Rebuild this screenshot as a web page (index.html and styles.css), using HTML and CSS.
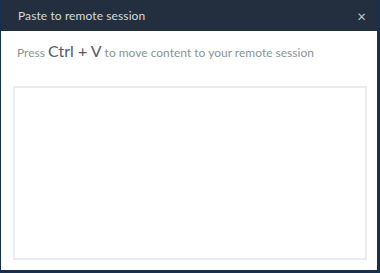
FILE: index.html
```html
<!DOCTYPE html>
<html lang="en">

<head>
    <meta charset="UTF-8">
    <meta name="viewport" content="width=device-width, initial-scale=1.0">
    <title>Paste to remote session</title>
    <link rel="stylesheet" href="styles.css">
</head>

<body>
    <div class="dialog">
        <div class="dialog_header">
            <span class="dialog_title">Paste to remote session</span>
            <span class="close_btn">&#215;</span>
        </div>
        <div class="dialog_body">
            <p class="hint">Press <span class="keys">Ctrl + V</span> to move content to your remote session</p>
            <textarea class="paste_area"></textarea>
        </div>
    </div>
</body>

</html>
```

FILE: styles.css
```css
* {
    margin: 0;
    padding: 0;
    box-sizing: border-box;
}

body {
    background: #16314f;
    font-family: Lato, "Open Sans", sans-serif;
    overflow: hidden;
}

.dialog {
    width: 376px;
    height: 270px;
    margin-left: 1px;
    background: #fff;
    display: flex;
    flex-direction: column;
}

.dialog_header {
    height: 31px;
    background: #232f3e;
    display: flex;
    align-items: center;
    justify-content: space-between;
    padding: 0 11px 0 17px;
}

.dialog_title {
    color: #d5dbdb;
    font-size: 12px;
    letter-spacing: 0.1px;
}

.close_btn {
    color: #c4c9cc;
    font-size: 15px;
}

.dialog_body {
    flex: 1;
    display: flex;
    flex-direction: column;
    padding: 0 10px 10px 12px;
}

.hint {
    color: #879596;
    font-size: 12px;
    padding: 10px 0 0 4px;
    height: 55px;
}

.keys {
    color: #545b64;
    font-size: 16px;
}

.paste_area {
    flex: 1;
    border: 2px solid #eaeded;
    resize: none;
    outline: none;
}
```
